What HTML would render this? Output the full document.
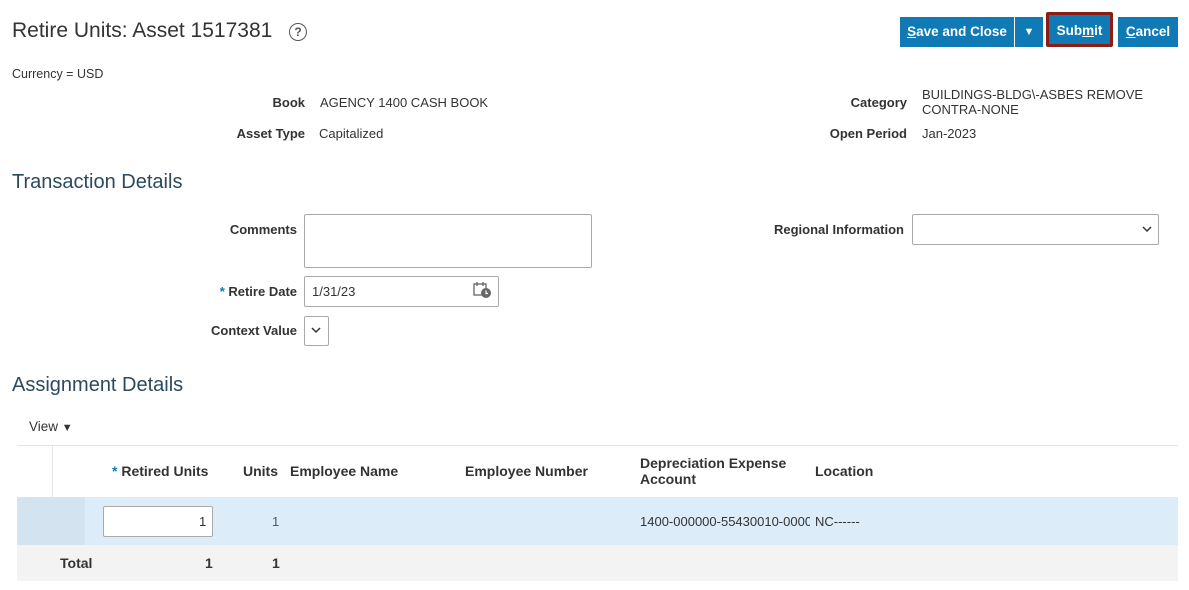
<!DOCTYPE html>
<html><head><meta charset="utf-8"><style>
body{margin:0;width:1189px;height:590px;background:#fff;font-family:"Liberation Sans",Arial,sans-serif;color:#333;position:relative;overflow:hidden}
.a{position:absolute;white-space:nowrap}
.lbl{font-weight:bold;font-size:13px;color:#333;text-align:right}
.v{font-size:13px;color:#333}
.h{font-size:20px;color:#2b4a5e}
.btn{position:absolute;background:#0f7ab5;color:#fff;font-weight:bold;font-size:13.5px;height:30px;line-height:30px;text-align:center}
.th{font-weight:bold;font-size:14px;color:#333}
</style></head><body>
<div class="a" style="left:12px;top:19px;font-size:21px;color:#333">Retire Units: Asset 1517381</div>
<div class="a" style="left:289px;top:23px;width:16px;height:16px;border:1.5px solid #555;border-radius:50%;font-size:12px;font-weight:bold;text-align:center;line-height:16px;color:#555">?</div>
<div class="btn" style="left:900px;top:17px;width:114px"><u>S</u>ave and Close</div>
<div class="btn" style="left:1015px;top:17px;width:28px;font-size:11px">▼</div>
<div class="a" style="left:1046px;top:12px;width:67px;height:35px;border:3px solid #8c1d12;box-sizing:border-box;border-radius:2px"></div>
<div class="btn" style="left:1049px;top:15px;width:61px;height:29px;line-height:31px">Sub<u>m</u>it</div>
<div class="btn" style="left:1118px;top:17px;width:60px"><u>C</u>ancel</div>
<div class="a v" style="left:12px;top:67px;font-size:12.5px">Currency = USD</div>
<div class="a lbl" style="left:200px;width:105px;top:95px">Book</div>
<div class="a v" style="left:320px;top:95px">AGENCY 1400 CASH BOOK</div>
<div class="a lbl" style="left:200px;width:105px;top:126px">Asset Type</div>
<div class="a v" style="left:319px;top:126px">Capitalized</div>
<div class="a lbl" style="left:800px;width:107px;top:95px">Category</div>
<div class="a v" style="left:922px;top:87px;line-height:15px">BUILDINGS-BLDG\-ASBES REMOVE<br>CONTRA-NONE</div>
<div class="a lbl" style="left:800px;width:107px;top:126px">Open Period</div>
<div class="a v" style="left:922px;top:126px">Jan-2023</div>
<div class="a h" style="left:12px;top:171px">Transaction Details</div>
<div class="a lbl" style="left:150px;width:147px;top:222px">Comments</div>
<div class="a" style="left:304px;top:214px;width:286px;height:52px;border:1px solid #aaa;border-radius:2px"></div>
<div class="a lbl" style="left:150px;width:147px;top:284px"><span style="color:#0f7ab5">*</span> Retire Date</div>
<div class="a" style="left:304px;top:276px;width:193px;height:29px;border:1px solid #aaa;border-radius:2px"></div>
<div class="a v" style="left:312px;top:284px">1/31/23</div>
<svg class="a" style="left:472px;top:281px" width="20" height="18" viewBox="0 0 20 18"><rect x="2" y="3" width="12" height="11" fill="none" stroke="#666" stroke-width="1.3"/><line x1="5" y1="1" x2="5" y2="5" stroke="#666" stroke-width="1.3"/><line x1="11" y1="1" x2="11" y2="5" stroke="#666" stroke-width="1.3"/><circle cx="14" cy="12" r="5" fill="#666"/><path d="M14 9.5v3h2" stroke="#fff" fill="none" stroke-width="1.2"/></svg>
<div class="a lbl" style="left:150px;width:147px;top:323px">Context Value</div>
<div class="a" style="left:304px;top:316px;width:23px;height:28px;border:1px solid #aaa;border-radius:2px"></div>
<svg class="a" style="left:311px;top:326px" width="10" height="8" viewBox="0 0 10 8"><path d="M1 2l4 4 4-4" fill="none" stroke="#333" stroke-width="1.5"/></svg>
<div class="a lbl" style="left:740px;width:164px;top:222px">Regional Information</div>
<div class="a" style="left:912px;top:214px;width:245px;height:29px;border:1px solid #aaa;border-radius:2px"></div>
<svg class="a" style="left:1142px;top:225px" width="10" height="8" viewBox="0 0 10 8"><path d="M1 2l4 4 4-4" fill="none" stroke="#333" stroke-width="1.5"/></svg>
<div class="a h" style="left:12px;top:374px">Assignment Details</div>
<div class="a v" style="left:29px;top:419px;font-size:13.5px">View <span style="font-size:11px">▼</span></div>
<div class="a" style="left:17px;top:445px;width:1161px;height:1px;background:#e5e5e5"></div>
<div class="a" style="left:52px;top:446px;width:1px;height:51px;background:#e5e5e5"></div>
<div class="a th" style="left:112px;top:463px"><span style="color:#0f7ab5">*</span> Retired Units</div>
<div class="a th" style="left:243px;top:463px">Units</div>
<div class="a th" style="left:290px;top:463px">Employee Name</div>
<div class="a th" style="left:465px;top:463px">Employee Number</div>
<div class="a th" style="left:640px;top:455px;line-height:16px">Depreciation Expense<br>Account</div>
<div class="a th" style="left:815px;top:463px">Location</div>
<div class="a" style="left:17px;top:497px;width:1161px;height:48px;background:#dcecf8"></div>
<div class="a" style="left:17px;top:497px;width:68px;height:48px;background:#d3e3ef"></div>
<div class="a" style="left:103px;top:506px;width:108px;height:29px;background:#fff;border:1px solid #aaa;border-radius:2px"></div>
<div class="a v" style="left:199px;top:514px">1</div>
<div class="a v" style="left:272px;top:514px;color:#555">1</div>
<div class="a v" style="left:640px;top:514px;width:170px;overflow:hidden">1400-000000-55430010-0000(</div>
<div class="a v" style="left:815px;top:514px">NC------</div>
<div class="a" style="left:17px;top:545px;width:1161px;height:36px;background:#f3f3f3"></div>
<div class="a th" style="left:60px;top:555px">Total</div>
<div class="a th" style="left:205px;top:555px">1</div>
<div class="a th" style="left:272px;top:555px">1</div>
</body></html>
